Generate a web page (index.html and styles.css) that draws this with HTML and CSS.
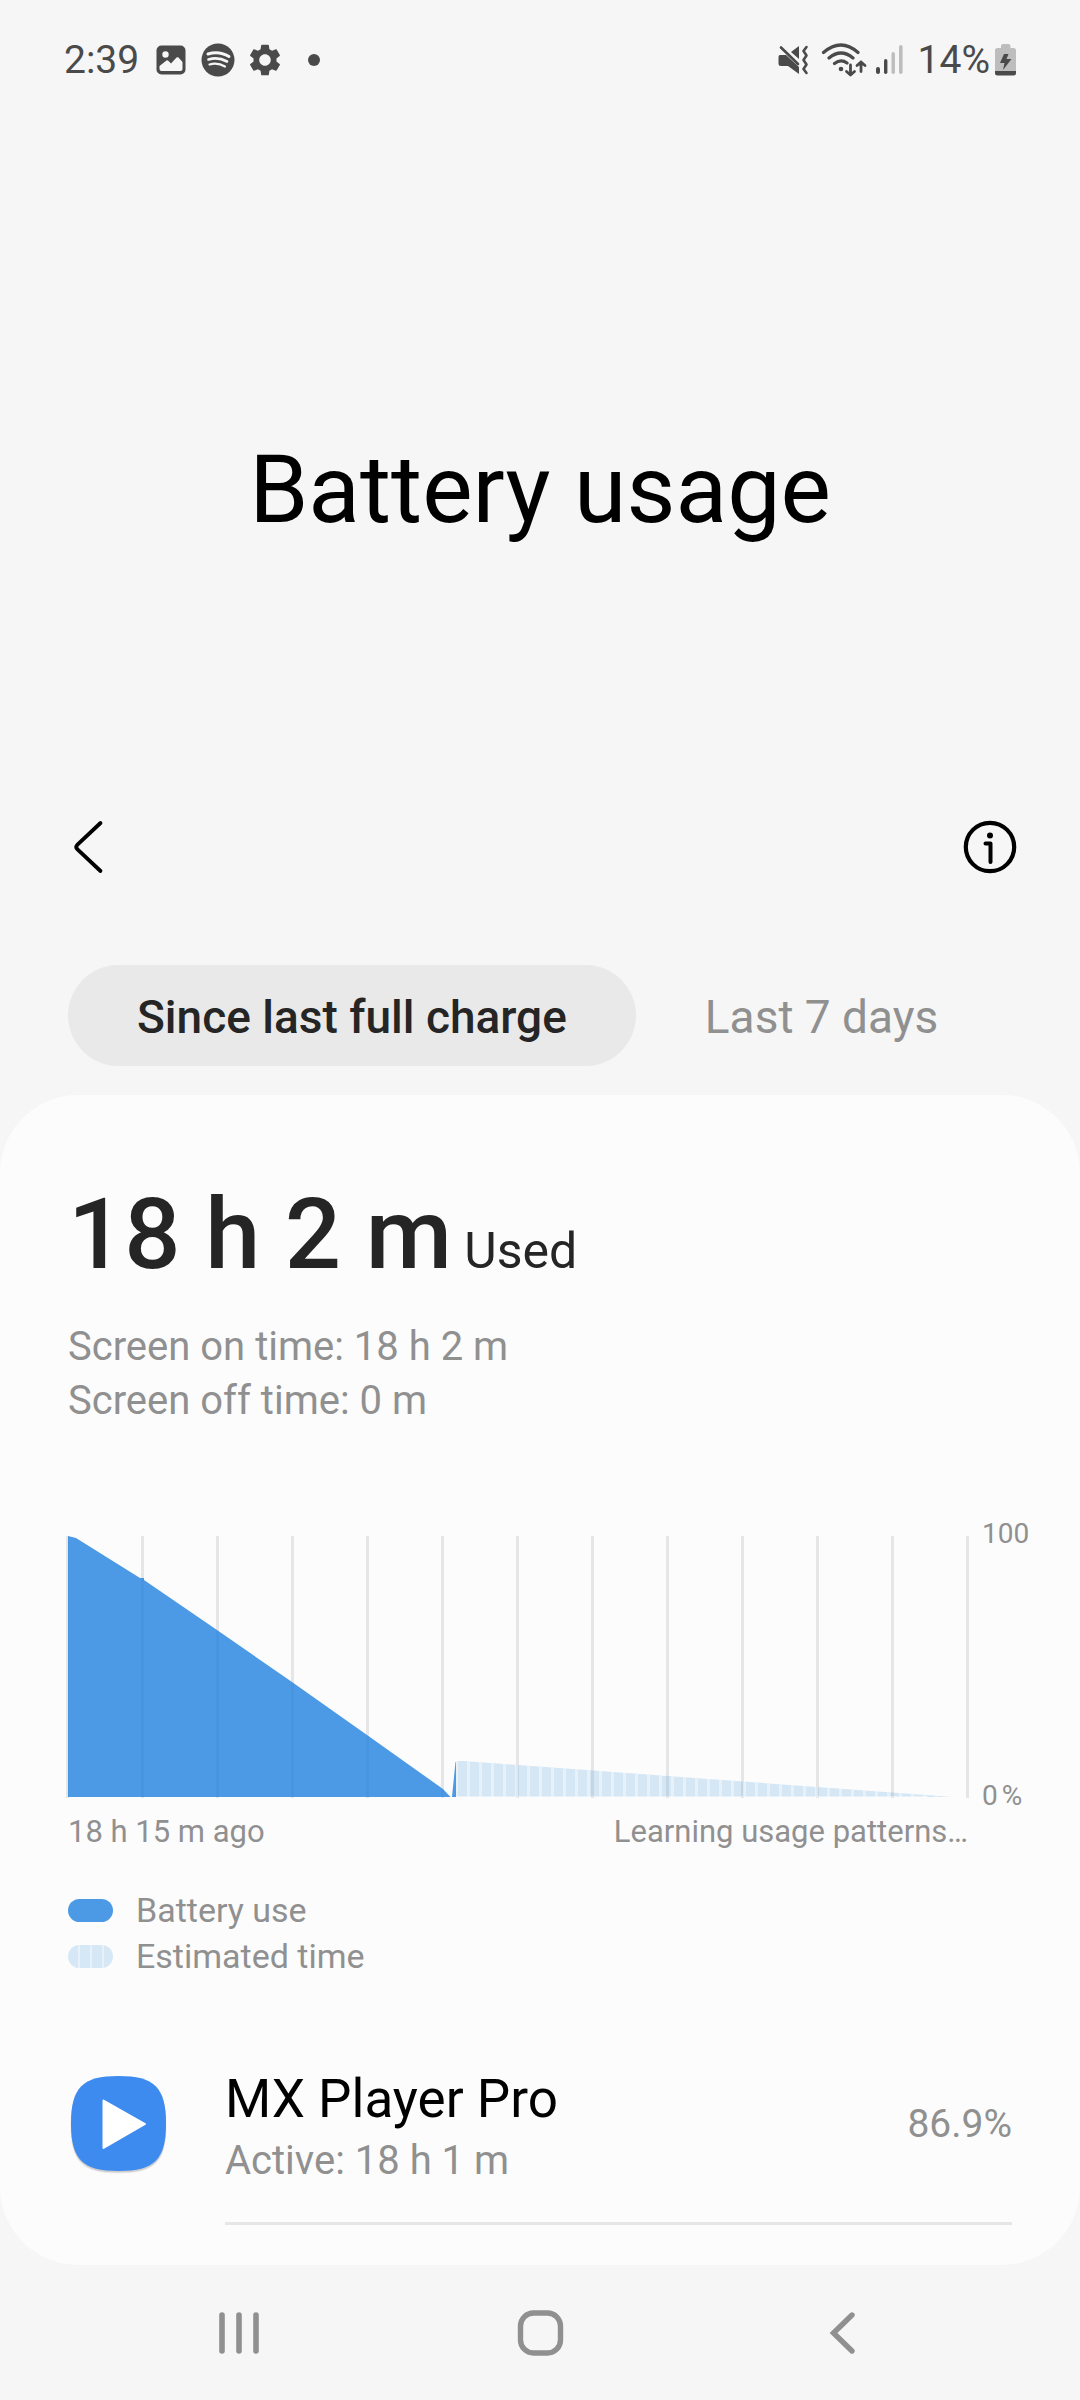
FILE: index.html
```html
<!DOCTYPE html>
<html lang="en">
<head>
<meta charset="utf-8">
<meta name="viewport" content="width=device-width, initial-scale=1">
<title>Battery usage</title>
<link rel="stylesheet" href="styles.css">
</head>
<body>
<div class="screen">
  <div class="status-bar">
    <div class="status-left">
      <span class="clock">2:39</span>
      <svg class="icon-image" width="30" height="30" viewBox="0 0 30 30" aria-hidden="true">
        <rect width="29" height="29" x=".5" y=".5" rx="5" fill="#4a4a4a"/>
        <circle cx="9.500" cy="9.500" r="3.200" fill="#f6f6f6"/>
        <path d="M3.500 21 10.500 15.500Q11.500 15 12.500 16L15 18.500 20.500 12.500Q21.500 11.800 22.500 12.500L26.500 17V24Q26.500 26 24.500 26H5.500Q3.500 26 3.500 24Z" fill="#f6f6f6"/>
      </svg>
      <svg class="icon-music" width="34" height="34" viewBox="0 0 34 34" aria-hidden="true">
        <circle cx="17" cy="17" r="16.500" fill="#4a4a4a"/>
        <g fill="none" stroke="#f6f6f6" stroke-linecap="round">
          <path d="M7 11Q18 7.500 28 13.500" stroke-width="3"/>
          <path d="M7.500 16.500Q17 13.500 26 18.500" stroke-width="2.600"/>
          <path d="M8.500 21.500Q16.500 19 24 23.500" stroke-width="2.200"/>
        </g>
      </svg>
      <svg class="icon-gear" width="32" height="32" viewBox="2 2 20 20" aria-hidden="true">
        <path fill="#4a4a4a" d="M19.140 12.940c.04-.3.060-.61.060-.94 0-.32-.02-.64-.07-.94l2.030-1.580c.18-.14.230-.41.120-.61l-1.920-3.320c-.12-.22-.37-.29-.59-.22l-2.390.96c-.5-.38-1.030-.7-1.620-.94l-.36-2.540c-.04-.24-.24-.41-.48-.41h-3.840c-.24 0-.43.17-.47.410l-.36 2.540c-.59.240-1.130.570-1.620.940l-2.390-.96c-.22-.08-.47 0-.59.220L2.740 8.870c-.12.210-.08.470.12.610l2.030 1.580c-.05.300-.09.630-.09.940s.02.640.07.940l-2.030 1.580c-.18.140-.23.410-.12.610l1.920 3.320c.12.220.370.290.590.220l2.390-.96c.5.380 1.030.7 1.620.940l.36 2.540c.05.240.240.410.480.410h3.840c.24 0 .44-.17.470-.41l.36-2.540c.59-.24 1.130-.56 1.620-.94l2.390.96c.22.080.470 0 .59-.22l1.920-3.320c.12-.22.070-.47-.12-.61zM12 15.600c-1.980 0-3.600-1.620-3.600-3.600s1.620-3.600 3.600-3.600 3.600 1.620 3.600 3.600-1.620 3.600-3.600 3.600"/>
      </svg>
      <span class="more-dot"></span>
    </div>
    <div class="status-right">
      <svg class="icon-mute" width="31" height="32" viewBox="0 0 31 32" aria-hidden="true">
        <path fill="#4a4a4a" d="M2 11H8L21 23V30L10 22H3Q.5 22 .5 19.500V13Q.5 11 2 11ZM13 8 21 2V15Z"/>
        <path fill="none" stroke="#4a4a4a" stroke-width="2.600" stroke-linecap="round" d="M3 3.500 20 20"/>
        <path fill="none" stroke="#4a4a4a" stroke-width="2.600" stroke-linecap="round" stroke-linejoin="round" d="M28.500 3 25.500 7 28.500 11.500 25.500 16 28.500 20.500 25.500 25 28.500 29"/>
      </svg>
      <svg class="icon-wifi" width="46" height="34" viewBox="0 0 46 34" aria-hidden="true">
        <g fill="none" stroke="#4a4a4a" stroke-width="3.200" stroke-linecap="round" stroke-linejoin="round">
          <path d="M2.500 9.500Q20 -5.500 37 9.500M8 15Q20 5 32 15M13.500 20.500Q20 15.500 26 20"/>
          <path stroke-width="2.800" d="M29.500 22V32M25.500 28.500 29.500 32 33.500 28.500M40 28.500V19M36 22.500 40 19 44 22.500"/>
        </g>
        <circle cx="20" cy="26" r="2.300" fill="#4a4a4a"/>
      </svg>
      <svg class="icon-signal" width="28" height="30" viewBox="0 0 28 30" aria-hidden="true">
        <g fill="#4a4a4a"><rect x="0" y="22" width="4" height="7" rx="2"/><rect x="8" y="14" width="3.400" height="15" rx="1.700"/></g>
        <g fill="#bdbdbd"><rect x="15.500" y="7" width="3.400" height="22" rx="1.700"/><rect x="23" y="0" width="3.600" height="29" rx="1.800"/></g>
      </svg>
      <span class="battery-level">14%</span>
      <svg class="icon-battery" width="22" height="32" viewBox="0 0 22 32" aria-hidden="true">
        <path fill="#bdbdbd" d="M6 4V2Q6 0 8 0H13.500Q15.500 0 15.500 2V4H18.500Q21 4 21 6.500V27H0V6.500Q0 4 2.500 4Z"/>
        <path fill="#4a4a4a" d="M0 27H21V29Q21 31.500 18.500 31.500H2.500Q0 31.500 0 29ZM9 10H13.500L11.500 15H16.500L8 26 9.500 19H5Z"/>
      </svg>
    </div>
  </div>

  <header class="hero"><h1>Battery usage</h1></header>

  <div class="toolbar">
    <button class="icon-button" type="button" aria-label="Back">
      <svg width="44" height="56" viewBox="0 0 44 56"><path d="M33.500 4 10.500 25.500Q8 28 10.500 30.500L33.500 52" fill="none" stroke="#000" stroke-width="3.800" stroke-linecap="round"/></svg>
    </button>
    <button class="icon-button" type="button" aria-label="Information">
      <svg width="56" height="56" viewBox="0 0 56 56"><circle cx="28" cy="28" r="24.200" fill="none" stroke="#000" stroke-width="4.200"/><circle cx="28" cy="16.500" r="3" fill="#000"/><path d="M23.500 24.500H28.500V43" fill="none" stroke="#000" stroke-width="4" stroke-linecap="round" stroke-linejoin="round"/></svg>
    </button>
  </div>

  <nav class="tabs" aria-label="Period">
    <button class="tab tab-active" type="button">Since last full charge</button>
    <button class="tab" type="button">Last 7 days</button>
  </nav>

  <main class="card">
    <section class="summary">
      <p class="total"><strong>18 h 2 m</strong> <span>Used</span></p>
      <p class="detail">Screen on time: 18 h 2 m</p>
      <p class="detail">Screen off time: 0 m</p>
    </section>

    <section class="chart" aria-label="Battery level">
      <svg class="plot" viewBox="0 0 900 262" preserveAspectRatio="none" aria-hidden="true">
        <defs>
          <pattern id="stripes" x="399" width="12" height="262" patternUnits="userSpaceOnUse">
            <rect width="3" height="262" fill="#fcfcfc" opacity=".5"/>
          </pattern>
        </defs>
        <path class="grid" d="M-.5 0V262M74.500 0V262M149.500 0V262M224.500 0V262M299.500 0V262M374.500 0V262M449.500 0V262M524.500 0V262M599.500 0V262M674.500 0V262M749.500 0V262M824.500 0V262M899.500 0V262"/>
        <path class="area-used" d="M0 0 8 2 72 42H76V44L149 94 224 146 299 199 375 253 382.500 261H0ZM384 261 387.500 226H388V261Z"/>
        <path class="area-estimate" d="M388 225 396 225 885 261H388Z"/>
        <path fill="url(#stripes)" d="M388 225 396 225 885 261H388Z"/>
        <path d="M388 260.500H860" stroke="#fcfcfc" stroke-width="1" opacity=".5"/>
      </svg>
      <div class="scale"><span>100</span><span class="percent"><span>0</span><span>%</span></span></div>
      <div class="range"><span>18 h 15 m ago</span><span>Learning usage patterns…</span></div>
    </section>

    <ul class="legend">
      <li><span class="swatch swatch-used"></span>Battery use</li>
      <li><span class="swatch swatch-estimate"></span>Estimated time</li>
    </ul>

    <section class="app">
      <svg class="app-icon" width="100" height="100" viewBox="0 0 100 100" aria-hidden="true">
        <path fill="#000" opacity=".07" d="M50.500 4C87 4 98.500 15 98.500 51.500S87 99.500 50.500 99.500 2.500 88 2.500 51.500 14 4 50.500 4Z"/>
        <path fill="#000" opacity=".12" d="M50.500 3C86.500 3 98 14.500 98 51S86.500 98.500 50.500 98.500 3 87 3 51 14.500 3 50.500 3Z"/>
        <path fill="#3d8bef" d="M50.500 2C86.500 2 98 13.500 98 49.500S86.500 97 50.500 97 3 85.500 3 49.500 14.500 2 50.500 2Z"/>
        <path fill="#fff" stroke="#fff" stroke-width="2" stroke-linejoin="round" d="M35.500 26.500V74L77 50Z"/>
      </svg>
      <div class="app-text">
        <h2>MX Player Pro</h2>
        <p>Active: 18 h 1 m</p>
      </div>
      <span class="share">86.9%</span>
    </section>
  </main>

  <nav class="system-nav" aria-label="System">
    <button type="button" aria-label="Recent apps"><svg width="48" height="48" viewBox="0 0 48 48"><path d="M7 6V42M24 6V42M41 6V42" stroke="#909090" stroke-width="5.600" stroke-linecap="round"/></svg></button>
    <button type="button" aria-label="Home"><svg width="48" height="48" viewBox="0 0 48 48"><rect x="4.500" y="4" width="40" height="40" rx="13" fill="none" stroke="#909090" stroke-width="5.400"/></svg></button>
    <button type="button" aria-label="Back"><svg width="48" height="48" viewBox="0 0 48 48"><path d="M35 6 16.500 24 35 42" fill="none" stroke="#909090" stroke-width="5.400" stroke-linecap="round"/></svg></button>
  </nav>
</div>
</body>
</html>
```
FILE: styles.css
```css
* { box-sizing: border-box; }

body {
  margin: 0;
  background: #f6f6f6;
  color: #252525;
  font-family: Roboto, "Liberation Sans", sans-serif;
}

h1, h2, p, ul { margin: 0; padding: 0; font-weight: 400; }
ul { list-style: none; }
svg { display: block; flex: none; }

button {
  border: 0;
  padding: 0;
  background: none;
  color: inherit;
  font: inherit;
}

.screen {
  display: flex;
  flex-direction: column;
  min-height: 100vh;
}

/* Status bar */
.status-bar {
  display: flex;
  justify-content: space-between;
  height: 120px;
  padding: 0 63px 0 64px;
  color: #4a4a4a;
  font-size: 39px;
}
.status-left, .status-right { display: flex; align-items: center; }
.icon-image { margin-left: 17px; }
.icon-music { margin-left: 15px; }
.icon-gear { margin-left: 14px; }
.more-dot {
  width: 12px;
  height: 12px;
  margin-left: 27px;
  border-radius: 50%;
  background: #4a4a4a;
}
.icon-wifi { margin-left: 12px; }
.icon-signal { margin-left: 9px; }
.battery-level { margin-left: 14px; }
.icon-battery { margin-left: 5px; }

/* Title and toolbar */
.hero { padding: 314px 68px 245px; text-align: center; }
.hero h1 {
  color: #000;
  font-size: 95px;
  line-height: 112px;
}
.toolbar {
  display: flex;
  align-items: center;
  justify-content: space-between;
  height: 112px;
  padding: 0 62px 0 67px;
}

/* Tabs */
.tabs {
  display: flex;
  margin-top: 62px;
  padding: 0 68px 29px;
}
.tab {
  height: 101px;
  padding: 2px 69px 0;
  border-radius: 51px;
  color: #909090;
  font-size: 46px;
}
.tab-active {
  background: #e9e9e9;
  color: #252525;
  font-weight: 500;
}

/* Card */
.card {
  padding: 81px 0 40px;
  border-radius: 78px;
  background: #fcfcfc;
  color: #909090;
}
.summary { padding: 0 68px; }
.total {
  margin-bottom: 28px;
  color: #252525;
  font-size: 50px;
  line-height: 60px;
}
.total strong { font-size: 99px; font-weight: 500; line-height: 116px; }
.detail { font-size: 40px; line-height: 54px; }

/* Chart */
.chart {
  display: grid;
  grid-template-columns: 1fr 98px;
  gap: 16px 14px;
  margin-top: 108px;
  padding-left: 68px;
}
.plot { width: 100%; height: 262px; overflow: visible; }
.grid { fill: none; stroke: #e6e6e6; stroke-width: 3; }
.area-used { fill: rgba(17, 121, 221, 0.75); }
.area-estimate { fill: rgba(62, 147, 222, 0.2); }
.scale {
  display: flex;
  flex-direction: column;
  justify-content: space-between;
  margin: -18px 0 -14px;
  font-size: 28px;
  line-height: 32px;
}
.percent { display: flex; gap: 4px; }
.range {
  display: flex;
  justify-content: space-between;
  font-size: 31px;
  line-height: 36px;
}

/* Legend */
.legend {
  margin-top: 37px;
  padding: 0 68px;
  font-size: 34px;
  line-height: 46px;
}
.legend li { display: flex; align-items: center; gap: 23px; }
.swatch {
  width: 45px;
  height: 23px;
  border-radius: 12px;
}
.swatch-used { background: #4c9ae5; }
.swatch-estimate {
  background: repeating-linear-gradient(90deg, #d6e7f6 0 10px, #e8f1f9 10px 12px);
}

/* App row */
.app {
  display: grid;
  grid-template-columns: 100px 1fr auto;
  align-items: center;
  margin: 77px 68px 0;
  column-gap: 57px;
  font-size: 40px;
}
.app-text { padding-top: 12px; line-height: 62px; }
.app-text h2 { color: #000; font-size: 53px; }
.share { font-size: 39px; }
.app::after {
  grid-column: 2 / -1;
  height: 3px;
  margin-top: 30px;
  background: #e6e6e6;
  content: "";
}

/* System navigation */
.system-nav {
  display: flex;
  flex: 1;
  min-height: 135px;
  padding: 0 88px;
}
.system-nav button {
  display: flex;
  flex: 1;
  align-items: center;
  justify-content: center;
}
```
